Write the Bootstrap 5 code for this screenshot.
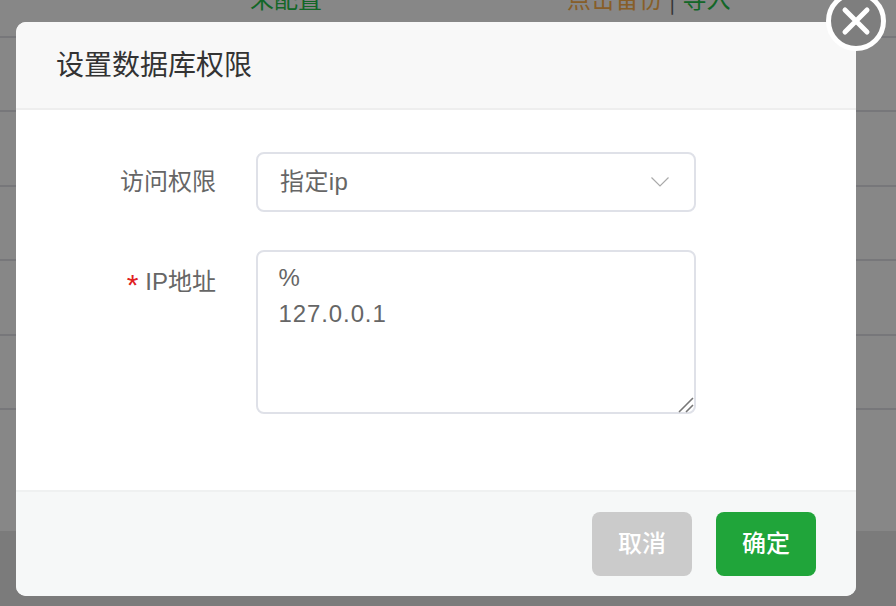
<!DOCTYPE html>
<html lang="zh">
<head>
<meta charset="utf-8">
<title>设置数据库权限</title>
<link href="https://cdn.jsdelivr.net/npm/bootstrap@5.3.0/dist/css/bootstrap.min.css" rel="stylesheet">
<style>
html,body{height:606px;overflow:hidden;margin:0}
body{font-family:"Liberation Sans","Noto Sans CJK SC",sans-serif;background:#e8e8e8;position:relative}
.page-table{background:#fff;height:568px;margin-top:-37px}
.page-row{height:74.5px;border-bottom:2px solid #e1e1e6;font-size:24px;line-height:70px;font-family:"Noto Sans CJK SC",sans-serif}
.cell-a{margin-left:250px;width:317px;color:#25c24a}
.cell-b{color:#ffb24d}
.cell-b i{font-style:normal;color:#666;margin:0 7px 0 6px}
.cell-b b{font-weight:400;color:#25c24a}
.veil{position:absolute;inset:0;background:rgba(0,0,0,.47)}
.dlg{position:absolute;left:16px;top:22px;width:840px;height:574px;border:0;border-radius:10px;overflow:visible;background:#fff}
.dlg .modal-header{height:88px;padding:1px 40px 0;background:#f8f8f8;border-bottom:2px solid #eee;border-radius:10px 10px 0 0}
.dlg .modal-title{font-size:28px;line-height:36px;color:#333;font-weight:400}
.dlg .modal-body{padding:42px 0 0;height:380px;flex:none}
.field-row{margin-bottom:38px}
.field-label{width:200px;text-align:right;font-size:24px;color:#666;padding-top:12px;line-height:36px}
.field-label.low{padding-top:14px}
.req{color:#e02020;margin-right:7px;font-size:30px;line-height:0;vertical-align:-5px}
.field-box{width:440px;margin-left:40px;position:relative}
.dlg .form-select{height:60px;border:2px solid #dfe1e8;border-radius:8px;font-size:24px;color:#666;padding:0 50px 0 22px;letter-spacing:.4px;background-position:right 25px center;background-size:18px 10px;background-image:url("data:image/svg+xml,%3Csvg xmlns='http://www.w3.org/2000/svg' viewBox='0 0 18 10'%3E%3Cpath d='M.5.5L9 9 17.5.5' fill='none' stroke='%23aaa' stroke-width='1.2'/%3E%3C/svg%3E")}
.dlg textarea.form-control{height:164px;border:2px solid #dfe1e8;border-radius:8px;font-size:24px;line-height:36px;color:#666;padding:8px 20.5px;resize:none;letter-spacing:.9px}
.grip{position:absolute;right:1px;bottom:0;pointer-events:none}
.dlg .modal-footer{height:106px;padding:20px 40px;background:#f6f8f8;border-top:2px solid #eff1f1;border-radius:0 0 10px 10px;gap:24px;flex:none}
.dlg .modal-footer .btn{width:100px;height:64px;margin:0;padding:0;font-size:24px;font-weight:500;color:#fff;border:0;border-radius:8px}
.btn-off{background:#cbcbcb}
.btn-ok{background:#20a53a}
.close-ring{position:absolute;right:-30px;top:-31px;width:60px;height:60px;border:0;padding:0;background:transparent}
</style>
</head>
<body>
<div class="page-table">
<div class="page-row d-flex"><div class="cell-a">未配置</div><div class="cell-b">点击备份<i>|</i><b>导入</b></div></div>
<div class="page-row"></div><div class="page-row"></div><div class="page-row"></div><div class="page-row"></div><div class="page-row"></div>
</div>
<div class="veil"></div>
<div class="modal-content dlg">
<div class="modal-header"><h5 class="modal-title">设置数据库权限</h5></div>
<div class="modal-body">
<div class="d-flex field-row"><label class="field-label" for="acc">访问权限</label><div class="field-box"><select class="form-select" id="acc"><option>指定ip</option></select></div></div>
<div class="d-flex field-row"><label class="field-label low" for="ips"><span class="req">*</span>IP地址</label><div class="field-box"><textarea class="form-control" id="ips">%
127.0.0.1</textarea><svg class="grip" width="18" height="18" viewBox="0 0 18 18"><path d="M2 16L16 2M9 16l7-7" stroke="#777" stroke-width="1.6" fill="none"/></svg></div></div>
</div>
<div class="modal-footer"><button type="button" class="btn btn-off">取消</button><button type="button" class="btn btn-ok">确定</button></div>
<button type="button" class="close-ring" aria-label="关闭"><svg width="60" height="60" viewBox="0 0 60 60"><circle cx="30" cy="30" r="27.5" fill="#7e7e7e" stroke="#fff" stroke-width="5"/><path d="M19 19l22 22M41 19L19 41" stroke="#fff" stroke-width="5" stroke-linecap="round"/></svg></button>
</div>
<script src="https://cdn.jsdelivr.net/npm/bootstrap@5.3.0/dist/js/bootstrap.bundle.min.js"></script>
</body>
</html>
